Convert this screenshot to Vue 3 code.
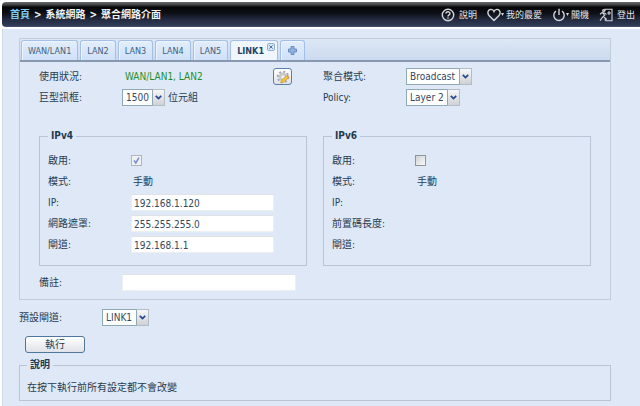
<script setup>
import { ref } from 'vue'

const tabs = ['WAN/LAN1', 'LAN2', 'LAN3', 'LAN4', 'LAN5', 'LINK1']
const active = ref('LINK1')
const jumbo = ref('1500')
const mode = ref('Broadcast')
const policy = ref('Layer 2')
const gateway = ref('LINK1')
const v4Enabled = ref(true)
const v6Enabled = ref(false)
const remark = ref('')
const v4Fields = ref([
  { id: 'v4-ip', label: 'IP:', value: '192.168.1.120' },
  { id: 'v4-mask', label: '網路遮罩:', value: '255.255.255.0' },
  { id: 'v4-gw', label: '閘道:', value: '192.168.1.1' },
])
const v6Labels = ['IP:', '前置碼長度:', '閘道:']
</script>

<template>
  <div class="page">
    <header class="topbar">
      <nav class="crumbs">
        <a href="#" class="home">首頁</a>
        <span>&gt;</span><span>系統網路</span><span>&gt;</span><span>聚合網路介面</span>
      </nav>
      <nav class="actions">
        <a href="#">
          <svg class="icon" viewBox="0 0 14 14">
            <circle cx="7" cy="7" r="5.7" />
            <path d="M5 5.6C5 3.2 9 3.2 9 5.5C9 6.9 7 6.8 7 8.5" />
            <path d="M7 9.6V10.8" />
          </svg>
          <span class="after-icon">說明</span>
        </a>
        <a href="#">
          <svg class="icon" viewBox="0 0 14 14">
            <path d="M7 12.6L2.2 7.8C-.4 4.6 1.4 1.3 4.1 1.4C5.7 1.5 6.6 2.5 7 3.5C7.4 2.5 8.3 1.5 9.9 1.4C12.6 1.3 14.4 4.6 11.8 7.8Z" />
          </svg>
          <svg class="caret" viewBox="0 0 3 3"><path d="M0 0H3L1.5 3Z" /></svg>
          <span>我的最愛</span>
        </a>
        <a href="#">
          <svg class="icon" viewBox="0 0 14 14">
            <path d="M4 3.1A5.2 5.2 0 1 0 10 3.1M7 .8V7" />
          </svg>
          <svg class="caret" viewBox="0 0 3 3"><path d="M0 0H3L1.5 3Z" /></svg>
          <span>關機</span>
        </a>
        <a href="#">
          <svg class="icon thin" viewBox="0 0 14 14">
            <path d="M6 3.2V1.3H13V12.7H7V10M8.2 5H12M10 3V7M3.8 5.2L5.6 7.2L3.6 9.2L1 12.6M4.4 8.4L6.2 10V12.6M1 6.2L3 4.6L6 5.2L7.4 6.6" />
            <circle cx="4.6" cy="2.6" r="1" />
          </svg>
          <span class="after-icon">登出</span>
        </a>
      </nav>
    </header>

    <main class="body">
      <section class="panel">
        <div class="tabs">
          <button
            v-for="t in tabs"
            :key="t"
            type="button"
            class="tab"
            :class="{ active: t === active }"
            @click="active = t"
          >
            {{ t }}
            <svg v-if="t === 'LINK1'" class="close" viewBox="0 0 8 8">
              <rect x=".5" y=".5" width="7" height="7" rx="1.5" />
              <path d="M2.4 2.4L5.6 5.6M5.6 2.4L2.4 5.6" />
            </svg>
          </button>
          <button type="button" class="tab add" aria-label="+">
            <svg class="plus" viewBox="0 0 9 9">
              <path d="M3 .5H6V3H8.5V6H6V8.5H3V6H.5V3H3Z" />
            </svg>
          </button>
        </div>

        <div class="content">
          <div class="columns">
            <div class="row">
              <span class="label">使用狀況:</span>
              <span class="status">WAN/LAN1, LAN2</span>
              <button type="button" class="gear" aria-label="設定">
                <svg viewBox="0 0 14 14">
                  <circle class="teeth" cx="7" cy="7" r="5.2" />
                  <circle class="disc" cx="7" cy="7" r="4.4" />
                  <circle class="hub" cx="7" cy="7" r="1.7" />
                  <path class="pencil" d="M5.4 10.2L10.6 5.8L12.6 7.8L7.6 12.2L4.6 13Z" />
                  <path class="tip" d="M10.6 5.8L11.6 5L13.4 6.9L12.6 7.8Z" />
                </svg>
              </button>
            </div>
            <div class="row">
              <label class="label" for="mode">聚合模式:</label>
              <span class="picker">
                <select id="mode" v-model="mode"><option>Broadcast</option></select>
                <span class="arrow"><svg viewBox="0 0 7 5"><path d="M.8 .8L3.5 3.5L6.2 .8" /></svg></span>
              </span>
            </div>
            <div class="row">
              <label class="label" for="jumbo">巨型訊框:</label>
              <span class="picker">
                <select id="jumbo" v-model="jumbo"><option>1500</option></select>
                <span class="arrow"><svg viewBox="0 0 7 5"><path d="M.8 .8L3.5 3.5L6.2 .8" /></svg></span>
              </span>
              <span class="unit">位元組</span>
            </div>
            <div class="row">
              <label class="label" for="policy">Policy:</label>
              <span class="picker">
                <select id="policy" v-model="policy"><option>Layer 2</option></select>
                <span class="arrow"><svg viewBox="0 0 7 5"><path d="M.8 .8L3.5 3.5L6.2 .8" /></svg></span>
              </span>
            </div>
          </div>

          <div class="columns groups">
            <fieldset class="group">
              <legend>IPv4</legend>
              <div class="row">
                <label class="label" for="v4-on">啟用:</label>
                <span class="tick">
                  <input id="v4-on" v-model="v4Enabled" type="checkbox" disabled />
                  <svg v-if="v4Enabled" viewBox="0 0 11 11"><path d="M3 5.4L4.8 8L8 2.6" /></svg>
                </span>
              </div>
              <div class="row">
                <span class="label">模式:</span><span class="text">手動</span>
              </div>
              <div v-for="f in v4Fields" :key="f.id" class="row">
                <label class="label" :for="f.id">{{ f.label }}</label>
                <input :id="f.id" v-model="f.value" type="text" class="box" />
              </div>
            </fieldset>
            <fieldset class="group">
              <legend>IPv6</legend>
              <div class="row">
                <label class="label" for="v6-on">啟用:</label>
                <span class="tick">
                  <input id="v6-on" v-model="v6Enabled" type="checkbox" />
                  <svg v-if="v6Enabled" viewBox="0 0 11 11"><path d="M3 5.4L4.8 8L8 2.6" /></svg>
                </span>
              </div>
              <div class="row">
                <span class="label">模式:</span><span class="text">手動</span>
              </div>
              <div v-for="l in v6Labels" :key="l" class="row">
                <span class="label">{{ l }}</span>
              </div>
            </fieldset>
          </div>

          <div class="row remark">
            <label class="label" for="remark">備註:</label>
            <input id="remark" v-model="remark" type="text" class="box wide" />
          </div>
        </div>
      </section>

      <div class="row gateway">
        <label class="label" for="gateway">預設閘道:</label>
        <span class="picker">
          <select id="gateway" v-model="gateway"><option>LINK1</option></select>
          <span class="arrow"><svg viewBox="0 0 7 5"><path d="M.8 .8L3.5 3.5L6.2 .8" /></svg></span>
        </span>
      </div>

      <button type="button" class="apply">執行</button>

      <fieldset class="help">
        <legend>說明</legend>
        <p>在按下執行前所有設定都不會改變</p>
      </fieldset>
    </main>
  </div>
</template>

<style>
body {
  background: #fff;
}
</style>

<style scoped>
.page,
.page button,
.page input,
.page select {
  font-family: "DejaVu Sans Condensed", "Noto Sans CJK TC", sans-serif;
  font-size: 10px;
  line-height: 12px;
  color: #1f3c52;
}
.page {
  display: flex;
  flex-direction: column;
  gap: 2px;
  box-sizing: border-box;
  min-height: 100vh;
  padding: 2px 0 0 2px;
}
.topbar {
  display: flex;
  justify-content: space-between;
  align-items: center;
  height: 25px;
  padding: 0 5px 0 8px;
  border-radius: 4px 0 0 4px;
  background: linear-gradient(#6a6c6e 0, #3c3d3e 3px, #050607 5px, #0c0f16 11px, #252c42 18px, #303b58 24px, #55617a 25px);
}
.crumbs {
  display: flex;
  gap: 4px;
  font-weight: bold;
  color: #f2f4f6;
}
.home {
  color: #7ecbf0;
  text-decoration: none;
}
.actions {
  display: flex;
  gap: 10px;
}
.actions a {
  display: flex;
  align-items: center;
  font-size: 9px;
  color: #e2e5ea;
  text-decoration: none;
}
.icon {
  width: 14px;
  height: 14px;
  fill: none;
  stroke: #d4d6da;
  stroke-width: 1.4;
}
.thin {
  stroke-width: 1.1;
}
.caret {
  width: 3px;
  height: 3px;
  margin-right: 2px;
  fill: #d4d6da;
}
.after-icon {
  margin-left: 4px;
}
.body {
  flex: 1;
  padding: 9px 29px 4px 16px;
  border-left: 1px solid #cfdae4;
  background: #dfe8f6;
}
.panel {
  border: 1px solid #c0ccd8;
}
.tabs {
  display: flex;
  gap: 2px;
  padding: 1px 1px 0;
  border-bottom: 2px solid #8798b0;
  background: linear-gradient(#dde8f6, #cbdaef);
}
.page .tab {
  display: flex;
  height: 20px;
  padding: 4px 6px 0;
  border: 1px solid #a3bfe8;
  border-bottom: 0;
  border-radius: 3px 3px 0 0;
  background: linear-gradient(#e3eefc, #cfe0f8);
  box-shadow: inset 1px 1px #eef5fe;
  font-size: 9px;
  color: #416080;
}
.page .active {
  position: relative;
  padding: 4px 13px 0 6px;
  background: #f1f6fd;
  font-weight: bold;
  color: #1c4468;
}
.close {
  position: absolute;
  top: 2px;
  right: 2px;
  width: 8px;
  height: 8px;
  fill: #d9e7f9;
  stroke: #8faed4;
  stroke-width: 1;
}
.close path {
  stroke: #55779f;
}
.page .add {
  padding: 5px 7px 0;
}
.plus {
  width: 9px;
  height: 9px;
  fill: #8fb0de;
  stroke: #6a8fc4;
}
.content {
  padding: 4px 19px 6px;
}
.columns {
  display: grid;
  grid-template-columns: 1fr 1fr;
  column-gap: 16px;
}
.groups {
  margin-top: 22px;
}
.row {
  display: flex;
  align-items: center;
  height: 21px;
}
.label {
  flex: none;
  width: 83px;
}
.status {
  flex: 1;
  padding-left: 3px;
  color: #1f8f2c;
}
.gear {
  display: flex;
  justify-content: center;
  width: 19px;
  height: 17px;
  margin-right: 15px;
  padding: 1px 0;
  border: 1px solid #5b7fa8;
  border-radius: 3px;
  background: linear-gradient(#fff, #e0e2e6);
}
.gear svg {
  width: 14px;
  height: 14px;
}
.teeth {
  fill: none;
  stroke: #a2a6aa;
  stroke-width: 2;
  stroke-dasharray: 2 2;
}
.disc {
  fill: #c6c9cc;
}
.hub {
  fill: #f2f2f2;
}
.pencil {
  fill: #f3c23a;
  stroke: #c98a1c;
  stroke-width: .5;
}
.tip {
  fill: #d88a4a;
}
.picker {
  display: grid;
  grid-template-columns: 1fr 13px;
  height: 17px;
}
.picker select {
  grid-area: 1 / 1 / 2 / 3;
  appearance: none;
  box-sizing: border-box;
  height: 17px;
  margin: 0;
  padding: 1px 15px 0 3px;
  border: 1px solid #8fa8b6;
  border-radius: 0;
  background: #fff;
  color: #34495e;
}
.arrow {
  grid-area: 1 / 2;
  display: flex;
  align-items: center;
  justify-content: center;
  z-index: 1;
  border: 1px solid #b4bcc6;
  border-left-color: #8fa8b6;
  background: linear-gradient(#f7f7f8, #cfd1d5);
  pointer-events: none;
}
.arrow svg {
  width: 7px;
  height: 5px;
  fill: none;
  stroke: #24458c;
  stroke-width: 1.7;
}
.unit {
  margin-left: 3px;
}
fieldset {
  min-width: 0;
  margin: 0;
  border: 1px solid #b9c5d6;
}
legend {
  padding: 0 3px;
  font-weight: bold;
  color: #1f3b52;
}
.group {
  padding: 8px 8px 10px;
}
.tick {
  display: grid;
}
.tick input {
  grid-area: 1 / 1;
  appearance: none;
  box-sizing: border-box;
  width: 11px;
  height: 11px;
  margin: 0;
  border: 1px solid #8f959b;
  background: linear-gradient(135deg, #cfd1d3, #fafafa);
}
.tick input:disabled {
  border-color: #b2b6bb;
  background: #f0f1f3;
}
.tick svg {
  grid-area: 1 / 1;
  width: 11px;
  height: 11px;
  fill: none;
  stroke: #7c8fd0;
  stroke-width: 1.6;
}
.text {
  padding-left: 2px;
}
.page .box {
  box-sizing: border-box;
  width: 143px;
  height: 17px;
  padding: 1px 2px 0;
  border: 1px solid #eceff0;
  border-top-color: #dfe3e6;
  background: #fff;
  color: #34495e;
}
.page .wide {
  width: 174px;
}
.remark {
  margin-top: 6px;
}
.gateway {
  margin-top: 7px;
}
.apply {
  display: block;
  width: 60px;
  height: 17px;
  margin: 8px 0 6px 6px;
  padding: 0;
  border: 1px solid #4f779c;
  border-radius: 3px;
  background: linear-gradient(#fff, #dfe2e8);
}
.help {
  padding: 6px 7px 2px;
}
.help p {
  margin: 0;
  line-height: 21px;
}
</style>
